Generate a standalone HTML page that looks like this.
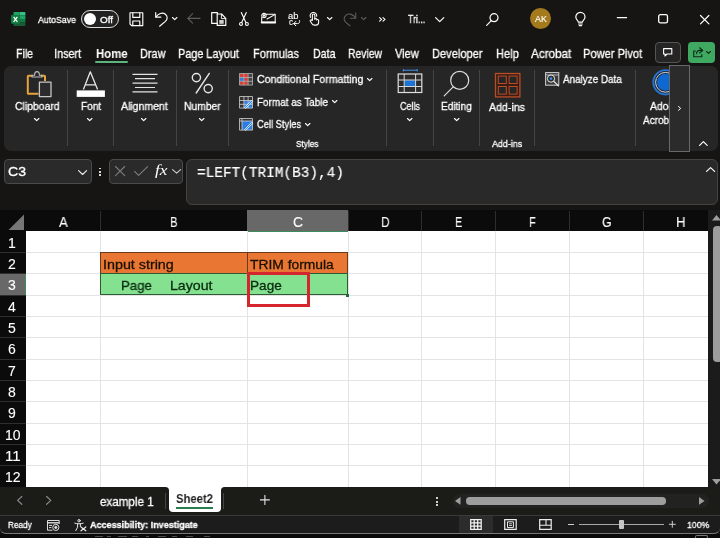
<!DOCTYPE html>
<html lang="en"><head><meta charset="utf-8"><title>Excel</title>
<style>
html,body{margin:0;padding:0;background:#161513;}
body{width:720px;height:538px;overflow:hidden;font-family:"Liberation Sans",sans-serif;}
#app{position:relative;width:720px;height:538px;overflow:hidden;background:#161513;}
.t{position:absolute;z-index:1;will-change:transform;-webkit-text-stroke:0.3px currentColor;white-space:pre;line-height:1;transform-origin:0 50%;}
.a{position:absolute;}
svg{position:absolute;overflow:visible;}
.sep{position:absolute;width:1px;background:#444;top:70px;height:76px;}
.gl{position:absolute;background:#e4e4e4;}

</style></head><body>
<div id="app">
<div class="a" style="left:3.7px;top:65.6px;width:714.3px;height:85.8px;background:#262626;border-radius:7px;"></div>
<div class="sep" style="left:67.1px;"></div>
<div class="sep" style="left:113.3px;"></div>
<div class="sep" style="left:175.8px;"></div>
<div class="sep" style="left:228.3px;"></div>
<div class="sep" style="left:385.9px;"></div>
<div class="sep" style="left:433.1px;"></div>
<div class="sep" style="left:478.9px;"></div>
<div class="sep" style="left:534.3px;"></div>
<div class="sep" style="left:634.9px;"></div>
<div class="a" style="left:95px;top:60.6px;width:32.5px;height:2px;background:#5fb37f;border-radius:1px;"></div>
<div class="a" style="left:4px;top:159px;width:86.5px;height:24px;background:#2a2a2a;border:1px solid #4a4a4a;border-radius:4px;box-sizing:border-box;width:87.5px;height:25px;"></div>
<div class="a" style="left:109px;top:159px;width:74px;height:25px;background:#2a2a2a;border:1px solid #4a4a4a;border-radius:4px;box-sizing:border-box;"></div>
<div class="a" style="left:186.3px;top:159px;width:532px;height:45.5px;background:#292929;border:1px solid #444;border-radius:6px;box-sizing:border-box;"></div>
<div class="a" style="left:0;top:210.3px;width:707.6px;height:276.7px;background:#0b0b0b;"></div>
<div class="a" style="left:26.3px;top:231.3px;width:681.3000000000001px;height:255.7px;background:#fff;"></div>
<div class="a" style="left:99.5px;top:211px;width:1px;height:20px;background:#2e2e2e;"></div>
<div class="a" style="left:246.5px;top:211px;width:1px;height:20px;background:#2e2e2e;"></div>
<div class="a" style="left:347.5px;top:211px;width:1px;height:20px;background:#2e2e2e;"></div>
<div class="a" style="left:420.5px;top:211px;width:1px;height:20px;background:#2e2e2e;"></div>
<div class="a" style="left:494.5px;top:211px;width:1px;height:20px;background:#2e2e2e;"></div>
<div class="a" style="left:568.5px;top:211px;width:1px;height:20px;background:#2e2e2e;"></div>
<div class="a" style="left:642.8px;top:211px;width:1px;height:20px;background:#2e2e2e;"></div>
<div class="a" style="left:0;top:252.11px;width:26px;height:1px;background:#2e2e2e;"></div>
<div class="a" style="left:0;top:273.42px;width:26px;height:1px;background:#2e2e2e;"></div>
<div class="a" style="left:0;top:294.73px;width:26px;height:1px;background:#2e2e2e;"></div>
<div class="a" style="left:0;top:316.04px;width:26px;height:1px;background:#2e2e2e;"></div>
<div class="a" style="left:0;top:337.35px;width:26px;height:1px;background:#2e2e2e;"></div>
<div class="a" style="left:0;top:358.65999999999997px;width:26px;height:1px;background:#2e2e2e;"></div>
<div class="a" style="left:0;top:379.97px;width:26px;height:1px;background:#2e2e2e;"></div>
<div class="a" style="left:0;top:401.28px;width:26px;height:1px;background:#2e2e2e;"></div>
<div class="a" style="left:0;top:422.59000000000003px;width:26px;height:1px;background:#2e2e2e;"></div>
<div class="a" style="left:0;top:443.9px;width:26px;height:1px;background:#2e2e2e;"></div>
<div class="a" style="left:0;top:465.21000000000004px;width:26px;height:1px;background:#2e2e2e;"></div>
<div class="a" style="left:247px;top:210.3px;width:101px;height:20.3px;background:#686868;border-bottom:1.2px solid #3d8a5c;"></div>
<div class="a" style="left:0;top:273.92px;width:25.3px;height:21.31px;background:#686868;border-right:1.2px solid #3d8a5c;"></div>
<svg style="left:8px;top:214px" width="17" height="17" viewBox="0 0 17 17"><path d="M16 0.5V16H0.5Z" fill="#767676"/></svg>
<div class="gl" style="left:99.5px;top:231.3px;width:1px;height:255.7px;"></div>
<div class="gl" style="left:246.5px;top:231.3px;width:1px;height:255.7px;"></div>
<div class="gl" style="left:347.5px;top:231.3px;width:1px;height:255.7px;"></div>
<div class="gl" style="left:420.5px;top:231.3px;width:1px;height:255.7px;"></div>
<div class="gl" style="left:494.5px;top:231.3px;width:1px;height:255.7px;"></div>
<div class="gl" style="left:568.5px;top:231.3px;width:1px;height:255.7px;"></div>
<div class="gl" style="left:642.8px;top:231.3px;width:1px;height:255.7px;"></div>
<div class="gl" style="left:26.3px;top:252.11px;width:681.3000000000001px;height:1px;"></div>
<div class="gl" style="left:26.3px;top:273.42px;width:681.3000000000001px;height:1px;"></div>
<div class="gl" style="left:26.3px;top:294.73px;width:681.3000000000001px;height:1px;"></div>
<div class="gl" style="left:26.3px;top:316.04px;width:681.3000000000001px;height:1px;"></div>
<div class="gl" style="left:26.3px;top:337.35px;width:681.3000000000001px;height:1px;"></div>
<div class="gl" style="left:26.3px;top:358.65999999999997px;width:681.3000000000001px;height:1px;"></div>
<div class="gl" style="left:26.3px;top:379.97px;width:681.3000000000001px;height:1px;"></div>
<div class="gl" style="left:26.3px;top:401.28px;width:681.3000000000001px;height:1px;"></div>
<div class="gl" style="left:26.3px;top:422.59000000000003px;width:681.3000000000001px;height:1px;"></div>
<div class="gl" style="left:26.3px;top:443.9px;width:681.3000000000001px;height:1px;"></div>
<div class="gl" style="left:26.3px;top:465.21000000000004px;width:681.3000000000001px;height:1px;"></div>
<div class="a" style="left:100px;top:252px;width:248px;height:22px;background:#e97632;box-sizing:border-box;border:1px solid #6b3a18;"></div>
<div class="a" style="left:246.5px;top:252px;width:1px;height:22px;background:#6b3a18;"></div>
<div class="a" style="left:100px;top:273px;width:248px;height:22.4px;background:#84e18f;box-sizing:border-box;border:1px solid #2c5a34;"></div>
<div class="a" style="left:246.5px;top:274px;width:1px;height:21px;background:#2c5a34;"></div>
<div class="a" style="left:346px;top:293.6px;width:3px;height:3px;background:#1d6b3e;"></div>
<div class="a" style="left:246.8px;top:271.8px;width:63px;height:35.4px;box-sizing:border-box;border:3px solid #d6262d;"></div>
<div class="a" style="left:707.6px;top:210.3px;width:12.399999999999977px;height:276.7px;background:#1b1b1b;"></div>
<div class="a" style="left:712.8px;top:226px;width:9px;height:136px;background:#9c9c9c;border-radius:4px;"></div>
<svg style="left:712.4px;top:215px" width="8" height="6" viewBox="0 0 8 6"><path d="M0 5.5L4.5 0L9 5.5Z" fill="#9e9e9e"/></svg>
<svg style="left:712.4px;top:479.2px" width="8" height="6" viewBox="0 0 8 6"><path d="M0 0L4.5 5.5L9 0Z" fill="#9e9e9e"/></svg>
<div class="a" style="left:0;top:487px;width:720px;height:28px;background:#1b1b18;"></div>
<div class="a" style="left:165.3px;top:493px;width:1px;height:16px;background:#454545;"></div>
<div class="a" style="left:222.6px;top:493px;width:1px;height:16px;background:#454545;"></div>
<div class="a" style="left:165.4px;top:487px;width:59.4px;height:3.6px;background:#fff;"></div>
<div class="a" style="left:165.4px;top:487px;width:3.6px;height:3.6px;background:#1b1b18;border-top-right-radius:3.6px;"></div>
<div class="a" style="left:221.1px;top:487px;width:3.7px;height:3.6px;background:#1b1b18;border-top-left-radius:3.6px;"></div>
<div class="a" style="left:169px;top:487px;width:52.1px;height:24.6px;background:#fff;border-radius:0 0 4px 4px;"></div>
<div class="a" style="left:176px;top:507.2px;width:37px;height:1.9px;background:#2a7d4f;"></div>
<div class="a" style="left:452.5px;top:494px;width:256px;height:14px;background:#222221;border-radius:7px;"></div>
<div class="a" style="left:466.3px;top:497px;width:200px;height:7.5px;background:#9e9e9e;border-radius:3.75px;"></div>
<svg style="left:455px;top:497px" width="6" height="8" viewBox="0 0 6 8"><path d="M5.5 0L0 3.9L5.5 7.8Z" fill="#9e9e9e"/></svg>
<svg style="left:699px;top:497px" width="6" height="8" viewBox="0 0 6 8"><path d="M0 0L5.5 3.9L0 7.8Z" fill="#9e9e9e"/></svg>
<div class="a" style="left:436px;top:497.3px;width:2px;height:2px;background:#d0d0d0;"></div>
<div class="a" style="left:436px;top:500.6px;width:2px;height:2px;background:#d0d0d0;"></div>
<div class="a" style="left:436px;top:503.9px;width:2px;height:2px;background:#d0d0d0;"></div>
<div class="a" style="left:0;top:514.7px;width:720px;height:19.5px;background:#1c1c1c;border-top:1px solid #3a3a3a;border-bottom:1px solid #777;border-radius:0 0 6px 6px;box-sizing:border-box;"></div>
<div class="a" style="left:0;top:534.2px;width:720px;height:4px;background:#0a0a0a;z-index:-0;"></div>
<div class="a" style="left:459.2px;top:515.5px;width:34.2px;height:17.6px;background:#2c2c2c;"></div>
<svg style="left:10.8px;top:11.9px" width="14.4" height="14" viewBox="0 0 14.4 14" stroke="none">
<path d="M3.2 0H8.6V3.5H2.5V0.7A0.7 0.7 0 0 1 3.2 0Z" fill="#21a366"/>
<path d="M8.6 0H13.7A0.7 0.7 0 0 1 14.4 0.7V3.5H8.6Z" fill="#33c481"/>
<rect x="2.5" y="3.5" width="6.1" height="3.5" fill="#107c41"/>
<rect x="8.6" y="3.5" width="5.8" height="3.5" fill="#21a366"/>
<rect x="2.5" y="7" width="6.1" height="3.5" fill="#185c37"/>
<rect x="8.6" y="7" width="5.8" height="3.5" fill="#107c41"/>
<path d="M2.5 10.5H14.4V13.3A0.7 0.7 0 0 1 13.7 14H3.2A0.7 0.7 0 0 1 2.5 13.3Z" fill="#185c37"/>
<rect x="0" y="2.9" width="8.8" height="8.8" rx="0.9" fill="#107c41"/>
<path d="M2.6 4.9L6.4 9.9M6.4 4.9L2.6 9.9" stroke="#fff" stroke-width="1.25" fill="none"/>
</svg>
<div class="a" style="left:81.2px;top:10.4px;width:38.2px;height:17.2px;box-sizing:border-box;border:1.1px solid #dcdcdc;border-radius:9px;background:#222;"></div>
<div class="a" style="left:83.9px;top:12.9px;width:12.3px;height:12.3px;border-radius:50%;background:#fff;"></div>
<svg style="left:128.7px;top:11.7px" width="14.4" height="14.2" viewBox="0 0 14.4 14.2" fill="none" stroke="#fff" stroke-width="1.15" stroke-linecap="round" stroke-linejoin="round"><path d="M1 0.8H13.8V13.6H2.6L1 12Z"/><path d="M3.8 0.8V5.4H10.8V0.8"/><path d="M3.8 13.6V9H10.8V13.6"/></svg>
<svg style="left:154px;top:11.7px" width="13.5" height="14.4" viewBox="0 0 13.5 14.4" fill="none" stroke="#fff" stroke-width="1.15" stroke-linecap="round" stroke-linejoin="round"><path d="M1.7 0.7V5.2H6.8"/><path d="M1.9 5C4 1.6 8.4 -0.2 11.4 2.2C14 4.4 13.5 7.4 11.4 9.4L5.6 14.2"/></svg>
<svg style="left:172px;top:16.7px" width="5.4" height="3.2" viewBox="0 0 5.4 3.2" fill="none" stroke="#fff" stroke-width="1.1" stroke-linecap="round" stroke-linejoin="round"><path d="M0.5 0.5L2.7 2.6L4.9 0.5"/></svg>
<svg style="left:186.7px;top:13px" width="13.5" height="11" viewBox="0 0 13.5 11" fill="none" stroke="#5c5c5c" stroke-width="1.1" stroke-linecap="round" stroke-linejoin="round"><path d="M13 5.4H0.8M5.6 0.6L0.8 5.4L5.6 10.2"/></svg>
<svg style="left:210.8px;top:12px" width="15.4" height="14" viewBox="0 0 15.4 14" fill="none" stroke="#fff" stroke-width="1.15" stroke-linecap="round" stroke-linejoin="round"><path d="M6.2 11.4H0.7V0.6H6.4V2"/><path d="M6.2 2H10.6L14.8 6.4V13.4H6.2Z"/><path d="M10.4 2.2V6.6H14.6" stroke-width="0.9"/><rect x="8.3" y="8" width="4.4" height="3.8" fill="#cfcfcf" stroke="none"/></svg>
<svg style="left:238.5px;top:12px" width="10" height="14" viewBox="0 0 10 14" fill="none" stroke="#fff" stroke-width="1.1" stroke-linecap="round" stroke-linejoin="round"><path d="M2.3 0.6L6.9 10.4M7.3 0.6L2.7 10.4"/><circle cx="2" cy="11.9" r="1.45"/><circle cx="7.9" cy="11.9" r="1.45"/></svg>
<svg style="left:260.8px;top:12px" width="14.8" height="11.8" viewBox="0 0 14.8 11.8" fill="none" stroke="#fff" stroke-width="1.05" stroke-linecap="round" stroke-linejoin="round"><path d="M5 2.2H14.2V10.2H0.7V5.6"/><path d="M0.7 10.5H14.2" stroke-width="1.9"/><path d="M6 7L13.8 2.6"/><circle cx="2.9" cy="3.6" r="2.2"/><circle cx="2.9" cy="3.6" r="0.7"/></svg>
<svg style="left:308.2px;top:12.2px" width="11.4" height="13.7" viewBox="0 0 12 14.4" fill="none" stroke="#fff" stroke-width="1.15" stroke-linecap="round" stroke-linejoin="round"><path d="M4.6 8.6V3.4A1.3 1.3 0 0 1 7.2 3.4V7.6"/><path d="M7.2 7.4A1.1 1.1 0 0 1 9.2 7.6V8.4A1.1 1.1 0 0 1 11.2 8.8V10.8C11.2 12.6 10.2 13.8 8.4 13.8H7C5.6 13.8 4.6 13.2 3.8 11.8L2.4 9.4C2 8.4 3.4 7.8 4.2 8.8"/><path d="M2.6 5.6A3.5 3.5 0 1 1 9.2 4.4"/></svg>
<svg style="left:327px;top:16.7px" width="5.4" height="3.2" viewBox="0 0 5.4 3.2" fill="none" stroke="#fff" stroke-width="1.1" stroke-linecap="round" stroke-linejoin="round"><path d="M0.5 0.5L2.7 2.6L4.9 0.5"/></svg>
<svg style="left:342.6px;top:11.7px" width="13.5" height="14.2" viewBox="0 0 13.5 14.2" fill="none" stroke="#5c5c5c" stroke-width="1.1" stroke-linecap="round" stroke-linejoin="round"><path d="M12.7 1V6.3H7.4"/><path d="M12.6 6.2C10.5 2.6 6.2 0.6 3.1 3.1C0.1 5.6 0.9 8.6 2.9 10.4L6.9 13.8"/></svg>
<svg style="left:360.8px;top:16.9px" width="5.4" height="3.2" viewBox="0 0 5.4 3.2" fill="none" stroke="#5c5c5c" stroke-width="1.1" stroke-linecap="round" stroke-linejoin="round"><path d="M0.5 0.5L2.7 2.6L4.9 0.5"/></svg>
<svg style="left:378.7px;top:17.4px" width="7" height="4.8" viewBox="0 0 7 4.8" fill="none" stroke="#fff" stroke-width="1.1" stroke-linecap="round" stroke-linejoin="round"><path d="M0.6 0.6L2.6 2.4L0.6 4.2M4 0.6L6 2.4L4 4.2"/></svg>
<svg style="left:434.5px;top:16.6px" width="9.4" height="5.4" viewBox="0 0 9.4 5.4" fill="none" stroke="#fff" stroke-width="1.2" stroke-linecap="round" stroke-linejoin="round"><path d="M0.6 0.6L4.7 4.7L8.8 0.6"/></svg>
<svg style="left:485.6px;top:12.6px" width="12.8" height="13" viewBox="0 0 12.8 13" fill="none" stroke="#fff" stroke-width="1.2" stroke-linecap="round" stroke-linejoin="round"><path d="M0.7 12.3L5.2 7.6"/><circle cx="8" cy="4.7" r="4"/></svg>
<div class="a" style="left:530.4px;top:8.4px;width:20.8px;height:20.8px;border-radius:50%;background:#a47a1c;"></div>
<svg style="left:575.4px;top:11.8px" width="11" height="14.2" viewBox="0 0 11 14.2" fill="none" stroke="#fff" stroke-width="1.2" stroke-linecap="round" stroke-linejoin="round"><path d="M3.4 10.2C3.4 8.6 0.8 7.8 0.8 5A4.6 4.6 0 0 1 10 5C10 7.8 7.4 8.6 7.4 10.2Z"/><path d="M3.6 12H7.2M4.2 13.6H6.6"/></svg>
<svg style="left:616.5px;top:17.4px" width="10" height="1.4" viewBox="0 0 10 1.4" fill="none" stroke="#fff" stroke-width="1.2" stroke-linecap="round" stroke-linejoin="round"><path d="M0.3 0.7H9.6"/></svg>
<svg style="left:657.8px;top:14.3px" width="10.2" height="9.6" viewBox="0 0 10.2 9.6" fill="none" stroke="#fff" stroke-width="1.3" stroke-linecap="round" stroke-linejoin="round"><rect x="0.7" y="0.7" width="8.8" height="8.2" rx="1.7"/></svg>
<svg style="left:700px;top:14.6px" width="9.4" height="9.4" viewBox="0 0 9.4 9.4" fill="none" stroke="#fff" stroke-width="1.2" stroke-linecap="round" stroke-linejoin="round"><path d="M0.5 0.5L8.9 8.9M8.9 0.5L0.5 8.9"/></svg>
<div class="a" style="left:654.6px;top:42.2px;width:26.2px;height:20.4px;box-sizing:border-box;border:1px solid #555;border-radius:4px;background:#252525;"></div>
<svg style="left:663px;top:48.2px" width="9.6" height="8.8" viewBox="0 0 9.6 8.8" fill="none" stroke="#fff" stroke-width="1.1" stroke-linecap="round" stroke-linejoin="round"><path d="M0.6 0.6H8.8V6H4L2 8V6H0.6Z"/></svg>
<div class="a" style="left:688px;top:42.2px;width:27.2px;height:20.4px;border-radius:4px;background:#3fa861;"></div>
<svg style="left:693px;top:47px" width="11" height="10.6" viewBox="0 0 11 10.6" fill="none" stroke="#0d2a17" stroke-width="1.1" stroke-linecap="round" stroke-linejoin="round"><path d="M2.4 4H0.7V9.8H8.8V7.6"/><path d="M6.6 0.8L9.8 3.4L6.6 6M9.6 3.4H7C4.6 3.4 3.6 4.8 3.4 6.8"/></svg>
<svg style="left:706.2px;top:50.8px" width="5" height="3" viewBox="0 0 5 3" fill="none" stroke="#0d2a17" stroke-width="1.1" stroke-linecap="round" stroke-linejoin="round"><path d="M0.5 0.5L2.5 2.4L4.5 0.5"/></svg>
<svg style="left:26px;top:70px" width="27" height="28" viewBox="0 0 27 28" fill="none" stroke-linejoin="round">
<path d="M6.4 5.8H2.6A0.8 0.8 0 0 0 1.8 6.6V23A0.8 0.8 0 0 0 2.6 23.8H12.4M15 5.8H18.2A0.8 0.8 0 0 1 19 6.6V11" stroke="#e8a33c" stroke-width="2"/>
<path d="M6 7V5.2H8.6C8.6 3 9.6 1.6 11 1.6C12.4 1.6 13.4 3 13.4 5.2H16V7Z" stroke="#bdbdbd" stroke-width="1.1"/>
<rect x="13.4" y="12.2" width="11.6" height="14.4" fill="#2b2b2b" stroke="#c6c6c6" stroke-width="1.3"/>
</svg>
<svg style="left:33.8px;top:118px" width="5.4" height="3.2" viewBox="0 0 5.4 3.2" fill="none" stroke="#fff" stroke-width="1.15" stroke-linecap="round" stroke-linejoin="round"><path d="M0.5 0.5L2.7 2.6L4.9 0.5"/></svg>
<svg style="left:76px;top:70px" width="30" height="28" viewBox="0 0 30 28" fill="none">
<path d="M7.6 19L14.3 1.8L21.4 19M9.6 14.8H19.6" stroke="#e6e6e6" stroke-width="1.3" stroke-linejoin="round" stroke-linecap="round"/>
<rect x="0.7" y="20.4" width="28.2" height="6.5" fill="#fff"/>
</svg>
<svg style="left:87.4px;top:118px" width="5.4" height="3.2" viewBox="0 0 5.4 3.2" fill="none" stroke="#fff" stroke-width="1.15" stroke-linecap="round" stroke-linejoin="round"><path d="M0.5 0.5L2.7 2.6L4.9 0.5"/></svg>
<svg style="left:131px;top:72px" width="28" height="22" viewBox="0 0 28 22" fill="none" stroke="#e2e2e2" stroke-width="1.2">
<path d="M1.5 2.3H26.5M4 6.7H24M1.5 11.1H26.5M4 15.5H24M1.5 19.8H26.5"/>
</svg>
<svg style="left:141.3px;top:118px" width="5.4" height="3.2" viewBox="0 0 5.4 3.2" fill="none" stroke="#fff" stroke-width="1.15" stroke-linecap="round" stroke-linejoin="round"><path d="M0.5 0.5L2.7 2.6L4.9 0.5"/></svg>
<svg style="left:190px;top:72px" width="24" height="23" viewBox="0 0 24 23" fill="none" stroke="#e6e6e6" stroke-width="1.4" stroke-linecap="round">
<circle cx="6.4" cy="5.6" r="4.1"/><circle cx="18.2" cy="16.6" r="4.1"/><path d="M19.3 1.4L6.2 21"/>
</svg>
<svg style="left:199.4px;top:118px" width="5.4" height="3.2" viewBox="0 0 5.4 3.2" fill="none" stroke="#fff" stroke-width="1.15" stroke-linecap="round" stroke-linejoin="round"><path d="M0.5 0.5L2.7 2.6L4.9 0.5"/></svg>
<svg style="left:239px;top:73px" width="14" height="12.6" viewBox="0 0 14 12.6">
<rect x="0.5" y="0.5" width="13" height="11.6" fill="#3a3a3a"/>
<rect x="1" y="1" width="3.6" height="3.2" fill="#e03c32"/><rect x="5.2" y="1" width="3.6" height="3.2" fill="#e03c32"/><rect x="9.4" y="1" width="3.6" height="3.2" fill="#444"/>
<rect x="1" y="4.8" width="3.6" height="3.2" fill="#2f7de0"/><rect x="5.2" y="4.8" width="3.6" height="3.2" fill="#e03c32"/><rect x="9.4" y="4.8" width="3.6" height="3.2" fill="#444"/>
<rect x="1" y="8.6" width="3.6" height="3.2" fill="#e03c32"/><rect x="5.2" y="8.6" width="3.6" height="3.2" fill="#e03c32"/><rect x="9.4" y="8.6" width="3.6" height="3.2" fill="#444"/>
<path d="M0.5 0.5H13.5V12.1H0.5ZM4.9 0.5V12.1M9.1 0.5V12.1M0.5 4.5H13.5M0.5 8.3H13.5" fill="none" stroke="#c9c9c9" stroke-width="0.7"/>
</svg>
<svg style="left:239px;top:95.7px" width="14.4" height="12.8" viewBox="0 0 14.4 12.8">
<rect x="0.5" y="0.5" width="13" height="11.6" fill="#333"/>
<rect x="4.9" y="4.5" width="8.6" height="7.6" fill="#2a7de1"/>
<path d="M0.5 0.5H13.5V12.1H0.5ZM4.9 0.5V12.1M9.1 0.5V12.1M0.5 4.5H13.5M0.5 8.3H13.5" fill="none" stroke="#d0d0d0" stroke-width="0.8"/>
<path d="M5.6 11.6L12.6 4.2L13.8 5.4L6.6 12.4Z" fill="#2a7de1" stroke="#fff" stroke-width="0.8"/>
</svg>
<svg style="left:239px;top:118.2px" width="14.4" height="12.8" viewBox="0 0 14.4 12.8">
<rect x="0.5" y="0.5" width="13" height="11.6" fill="#333"/>
<rect x="3" y="3" width="10.5" height="9" fill="#2a7de1"/>
<path d="M0.5 0.5H13.5V12.1H0.5ZM0.5 3H13.5M3 0.5V12.1" fill="none" stroke="#d0d0d0" stroke-width="0.8"/>
<path d="M5.6 11.6L12.6 4.2L13.8 5.4L6.6 12.4Z" fill="#2a7de1" stroke="#fff" stroke-width="0.8"/>
</svg>
<svg style="left:366.6px;top:77.8px" width="5.4" height="3.2" viewBox="0 0 5.4 3.2" fill="none" stroke="#fff" stroke-width="1.15" stroke-linecap="round" stroke-linejoin="round"><path d="M0.5 0.5L2.7 2.6L4.9 0.5"/></svg>
<svg style="left:331.6px;top:100.4px" width="5.4" height="3.2" viewBox="0 0 5.4 3.2" fill="none" stroke="#fff" stroke-width="1.15" stroke-linecap="round" stroke-linejoin="round"><path d="M0.5 0.5L2.7 2.6L4.9 0.5"/></svg>
<svg style="left:304.8px;top:122.8px" width="5.4" height="3.2" viewBox="0 0 5.4 3.2" fill="none" stroke="#fff" stroke-width="1.15" stroke-linecap="round" stroke-linejoin="round"><path d="M0.5 0.5L2.7 2.6L4.9 0.5"/></svg>
<svg style="left:397px;top:68px" width="26" height="26" viewBox="0 0 26 26" fill="none">
<rect x="1.2" y="6" width="23.6" height="18.5" fill="#2b2b2b" stroke="#e0e0e0" stroke-width="1.2"/>
<rect x="7.4" y="12.2" width="11" height="6.2" fill="#1a73d6"/>
<path d="M7.2 6V24.5M18.6 6V24.5M1.2 12H24.8M1.2 18.5H24.8" stroke="#d8d8d8" stroke-width="1"/>
<path d="M6.4 2.3H20.2M6.4 1V3.6M20.2 1V3.6" stroke="#3a8ee6" stroke-width="1.1"/>
</svg>
<svg style="left:406.9px;top:118.2px" width="5.4" height="3.2" viewBox="0 0 5.4 3.2" fill="none" stroke="#fff" stroke-width="1.15" stroke-linecap="round" stroke-linejoin="round"><path d="M0.5 0.5L2.7 2.6L4.9 0.5"/></svg>
<svg style="left:442px;top:69px" width="30" height="30" viewBox="0 0 30 30" fill="none" stroke="#dcdcdc" stroke-width="1.2" stroke-linecap="round">
<circle cx="17.7" cy="11.4" r="9"/><path d="M11.2 17.8L2.2 26.8"/>
</svg>
<svg style="left:453.6px;top:118.2px" width="5.4" height="3.2" viewBox="0 0 5.4 3.2" fill="none" stroke="#fff" stroke-width="1.15" stroke-linecap="round" stroke-linejoin="round"><path d="M0.5 0.5L2.7 2.6L4.9 0.5"/></svg>
<svg style="left:494px;top:72px" width="27" height="26" viewBox="0 0 27 26" fill="none" stroke="#b84e28">
<rect x="1.5" y="1.5" width="24.4" height="23.4" fill="#3a1d12" stroke-width="1.3"/>
<rect x="4.3" y="4.1" width="8" height="7.4" fill="#262626" stroke-width="1"/>
<rect x="15.1" y="4.1" width="8" height="7.4" fill="#262626" stroke-width="1"/>
<rect x="4.3" y="14.5" width="8" height="7.6" fill="#262626" stroke-width="1"/>
<rect x="15.1" y="14.5" width="8" height="7.6" fill="#262626" stroke-width="1"/>
</svg>
<svg style="left:544.8px;top:72px" width="14.6" height="14.4" viewBox="0 0 14.6 14.4" fill="none">
<rect x="0.6" y="0.6" width="13.2" height="12.6" fill="#3c3c3c" stroke="#d2d2d2" stroke-width="1"/>
<path d="M0.6 3H13.8" stroke="#d2d2d2" stroke-width="0.8"/>
<circle cx="6" cy="6.6" r="3.6" fill="#2b2b2b" stroke="#e8e8e8" stroke-width="1"/>
<circle cx="6" cy="6.6" r="1.4" fill="#3a8ee6"/>
<path d="M8.8 9.4L13.4 13.8" stroke="#e8e8e8" stroke-width="1.3" stroke-linecap="round"/>
</svg>
<svg style="left:651px;top:68px" width="29" height="29" viewBox="0 0 29 29" fill="none">
<circle cx="14.5" cy="14.3" r="12.2" stroke="#2376d8" stroke-width="1.9"/>
<circle cx="14.5" cy="14.3" r="9.9" stroke="#c9dcf5" stroke-width="1"/>
<circle cx="14.5" cy="14.3" r="8.5" fill="#0f67d2"/>
</svg>
<div class="a" style="left:669.3px;top:65.2px;width:20.8px;height:86.4px;box-sizing:border-box;border:1px solid #686868;background:#2b2b2b;z-index:2;"></div>
<svg style="left:678px;top:106.3px;z-index:3" width="3.6" height="4.8" viewBox="0 0 3.6 4.8" fill="none" stroke="#fff" stroke-width="1" stroke-linecap="round" stroke-linejoin="round"><path d="M0.5 0.5L2.7 2.4L0.5 4.3"/></svg>
<svg style="left:699.4px;top:140.6px" width="8.8" height="5" viewBox="0 0 8.8 5" fill="none" stroke="#fff" stroke-width="1.2" stroke-linecap="round" stroke-linejoin="round"><path d="M0.6 4.4L4.4 0.6L8.2 4.4"/></svg>
<svg style="left:293.2px;top:19.6px" width="7.4" height="6.6" viewBox="0 0 7.4 6.6" fill="none" stroke="#fff" stroke-width="1.0" stroke-linecap="round" stroke-linejoin="round"><path d="M6.6 0.6V1.6C6.6 3 5.6 3.6 4.4 3.6H0.8M2.8 1.4L0.7 3.6L2.8 5.8"/></svg>
<svg style="left:77.6px;top:169.8px" width="9.2" height="5.2" viewBox="0 0 9.2 5.2" fill="none" stroke="#e8e8e8" stroke-width="1.2" stroke-linecap="round" stroke-linejoin="round"><path d="M0.6 0.6L4.6 4.5L8.6 0.6"/></svg>
<div class="a" style="left:99.2px;top:167.6px;width:1.8px;height:1.8px;background:#d8d8d8;"></div>
<div class="a" style="left:99.2px;top:170.9px;width:1.8px;height:1.8px;background:#d8d8d8;"></div>
<div class="a" style="left:99.2px;top:174.2px;width:1.8px;height:1.8px;background:#d8d8d8;"></div>
<svg style="left:115px;top:166.2px" width="10.2" height="10.2" viewBox="0 0 10.2 10.2" fill="none" stroke="#7d7d7d" stroke-width="1.1" stroke-linecap="round" stroke-linejoin="round"><path d="M0.5 0.5L9.7 9.7M9.7 0.5L0.5 9.7"/></svg>
<svg style="left:133.6px;top:166.2px" width="14.2" height="10" viewBox="0 0 14.2 10" fill="none" stroke="#7d7d7d" stroke-width="1.1" stroke-linecap="round" stroke-linejoin="round"><path d="M0.6 5.4L4.6 9.4L13.6 0.6"/></svg>
<svg style="left:172px;top:169.4px" width="9.2" height="4.8" viewBox="0 0 9.2 4.8" fill="none" stroke="#cfcfcf" stroke-width="1.1" stroke-linecap="round" stroke-linejoin="round"><path d="M0.6 0.6L4.6 4.2L8.6 0.6"/></svg>
<svg style="left:705.6px;top:167.2px" width="9.2" height="5" viewBox="0 0 9.2 5" fill="none" stroke="#fff" stroke-width="1.2" stroke-linecap="round" stroke-linejoin="round"><path d="M0.6 4.4L4.6 0.6L8.6 4.4"/></svg>
<svg style="left:17.2px;top:496.2px" width="5.4" height="8.8" viewBox="0 0 5.4 8.8" fill="none" stroke="#8a8a8a" stroke-width="1.2" stroke-linecap="round" stroke-linejoin="round"><path d="M4.8 0.5L0.6 4.4L4.8 8.3"/></svg>
<svg style="left:45.6px;top:496.2px" width="5.4" height="8.8" viewBox="0 0 5.4 8.8" fill="none" stroke="#8a8a8a" stroke-width="1.2" stroke-linecap="round" stroke-linejoin="round"><path d="M0.6 0.5L4.8 4.4L0.6 8.3"/></svg>
<svg style="left:260.3px;top:495.3px" width="9.8" height="9.8" viewBox="0 0 9.8 9.8" fill="none" stroke="#e6e6e6" stroke-width="1.1" stroke-linecap="round" stroke-linejoin="round"><path d="M4.9 0.4V9.4M0.4 4.9H9.4"/></svg>
<svg style="left:47.2px;top:519.6px" width="13" height="11.2" viewBox="0 0 13 11.2" fill="none" stroke="#e0e0e0" stroke-width="1">
<path d="M0.5 0.5H12.2V4M0.5 0.5V10.2H5.4"/><path d="M0.5 2.8H12.2" stroke-width="1.4"/><path d="M2 5.4H5M2 7.6H4.4"/>
<circle cx="8.8" cy="7.4" r="3.1"/><circle cx="8.8" cy="7.4" r="1.1" fill="#e0e0e0"/>
</svg>
<svg style="left:74.2px;top:518.6px" width="12.8" height="12.4" viewBox="0 0 12.8 12.4" fill="none" stroke="#e8e8e8" stroke-width="1" stroke-linecap="round" stroke-linejoin="round">
<circle cx="5" cy="1.7" r="1.2"/><path d="M0.8 4.2C3.4 5 6.6 5 9.2 4.2M3.6 5V8.2L1.8 11.6M6.4 5V7.4"/><path d="M7 8L11.8 11.8M11.8 8L7 11.8" stroke-width="1.2"/>
</svg>
<svg style="left:470px;top:518.6px" width="12" height="11.2" viewBox="0 0 12 11.2" fill="none" stroke="#f4f4f4" stroke-width="1.25">
<path d="M0.7 0.7H11.2V10.4H0.7ZM4.2 0.7V10.4M7.7 0.7V10.4M0.7 3.9H11.2M0.7 7.2H11.2"/></svg>
<svg style="left:504.2px;top:518.6px" width="13" height="11.2" viewBox="0 0 13 11.2" fill="none" stroke="#ececec" stroke-width="1.2">
<path d="M0.7 0.7H12.2V10.4H0.7Z"/><path d="M3.5 2.8H9.4V8.6H3.5Z" stroke-width="1"/><path d="M5 4.8H8M5 6.5H8" stroke-width="0.8"/></svg>
<svg style="left:538.8px;top:518.6px" width="13" height="11.2" viewBox="0 0 13 11.2" fill="none" stroke="#ececec" stroke-width="1.2">
<path d="M0.7 0.7H12.2V10.4H0.7Z"/><path d="M7 0.7V6.2M0.7 6.2H12.2" stroke-width="1.1"/></svg>
<div class="a" style="left:567.5px;top:524px;width:6.4px;height:1px;background:#d0d0d0;"></div>
<div class="a" style="left:578.8px;top:524px;width:85px;height:1px;background:#a8a8a8;"></div>
<div class="a" style="left:619px;top:519.6px;width:4.6px;height:9.8px;background:#c4c4c4;border-radius:1px;"></div>
<svg style="left:668.8px;top:521.2px" width="6.6" height="6.6" viewBox="0 0 6.6 6.6" fill="none" stroke="#d0d0d0" stroke-width="1" stroke-linecap="round" stroke-linejoin="round"><path d="M3.3 0.3V6.3M0.3 3.3H6.3"/></svg>
<div class="a" style="left:95px;top:535.6px;width:8px;height:1.4px;background:#4c4c4c;"></div>
<div class="a" style="left:107px;top:535.6px;width:4px;height:1.4px;background:#4c4c4c;"></div>
<div class="a" style="left:118px;top:535.6px;width:9px;height:1.4px;background:#4c4c4c;"></div>
<div class="a" style="left:132px;top:535.6px;width:6px;height:1.4px;background:#4c4c4c;"></div>
<div class="a" style="left:146px;top:535.6px;width:3px;height:1.4px;background:#4c4c4c;"></div>
<div class="a" style="left:158px;top:535.6px;width:8px;height:1.4px;background:#4c4c4c;"></div>
<div class="a" style="left:172px;top:535.6px;width:5px;height:1.4px;background:#4c4c4c;"></div>
<div class="a" style="left:186px;top:535.6px;width:7px;height:1.4px;background:#4c4c4c;"></div>
<div class="a" style="left:204px;top:535.6px;width:6px;height:1.4px;background:#4c4c4c;"></div>
<div class="a" style="left:695px;top:535.4px;width:13px;height:3px;box-sizing:border-box;border:1px solid #777;border-bottom:none;border-radius:2px 2px 0 0;"></div>
<span class="t" id="t0" style="left:38.30px;top:15.00px;font-size:9.4px;color:#ffffff;transform:scaleX(0.9322);">AutoSave</span>
<span class="t" id="t1" style="left:100.30px;top:15.00px;font-size:9.4px;color:#ffffff;transform:scaleX(1.0532);">Off</span>
<span class="t" id="t2" style="left:407.80px;top:14.00px;font-size:10.8px;color:#ffffff;transform:scaleX(0.8112);">Tri...</span>
<span class="t" id="t3" style="left:535.10px;top:15.00px;font-size:8.6px;color:#ffffff;transform:scaleX(1.0289);-webkit-text-stroke-width:0.1px;">AK</span>
<span class="t" id="t4" style="left:15.90px;top:48.00px;font-size:12.2px;color:#ffffff;transform:scaleX(0.8706);">File</span>
<span class="t" id="t5" style="left:54.40px;top:48.00px;font-size:12.2px;color:#ffffff;transform:scaleX(0.8890);">Insert</span>
<span class="t" id="t6" style="left:95.50px;top:48.00px;font-size:12.2px;color:#ffffff;font-weight:700;transform:scaleX(0.9358);-webkit-text-stroke-width:0;">Home</span>
<span class="t" id="t7" style="left:139.50px;top:48.00px;font-size:12.2px;color:#ffffff;transform:scaleX(0.8962);">Draw</span>
<span class="t" id="t8" style="left:178.30px;top:48.00px;font-size:12.2px;color:#ffffff;transform:scaleX(0.8897);">Page Layout</span>
<span class="t" id="t9" style="left:253.30px;top:48.00px;font-size:12.2px;color:#ffffff;transform:scaleX(0.9036);">Formulas</span>
<span class="t" id="t10" style="left:312.50px;top:48.00px;font-size:12.2px;color:#ffffff;transform:scaleX(0.8738);">Data</span>
<span class="t" id="t11" style="left:348.00px;top:48.00px;font-size:12.2px;color:#ffffff;transform:scaleX(0.8507);">Review</span>
<span class="t" id="t12" style="left:395.00px;top:48.00px;font-size:12.2px;color:#ffffff;transform:scaleX(0.9045);">View</span>
<span class="t" id="t13" style="left:431.70px;top:48.00px;font-size:12.2px;color:#ffffff;transform:scaleX(0.9089);">Developer</span>
<span class="t" id="t14" style="left:496.30px;top:48.00px;font-size:12.2px;color:#ffffff;transform:scaleX(0.9131);">Help</span>
<span class="t" id="t15" style="left:530.80px;top:48.00px;font-size:12.2px;color:#ffffff;transform:scaleX(0.9615);">Acrobat</span>
<span class="t" id="t16" style="left:583.30px;top:48.00px;font-size:12.2px;color:#ffffff;transform:scaleX(0.9103);">Power Pivot</span>
<span class="t" id="t17" style="left:14.50px;top:101.00px;font-size:11.1px;color:#ffffff;transform:scaleX(0.9414);">Clipboard</span>
<span class="t" id="t18" style="left:80.50px;top:101.00px;font-size:11.1px;color:#ffffff;transform:scaleX(0.9143);">Font</span>
<span class="t" id="t19" style="left:121.30px;top:101.00px;font-size:11.1px;color:#ffffff;transform:scaleX(0.9464);">Alignment</span>
<span class="t" id="t20" style="left:183.80px;top:101.00px;font-size:11.1px;color:#ffffff;transform:scaleX(0.9298);">Number</span>
<span class="t" id="t21" style="left:257.00px;top:74.00px;font-size:10.8px;color:#ffffff;transform:scaleX(0.9804);">Conditional Formatting</span>
<span class="t" id="t22" style="left:257.00px;top:97.00px;font-size:10.8px;color:#ffffff;transform:scaleX(0.9195);">Format as Table</span>
<span class="t" id="t23" style="left:257.00px;top:119.00px;font-size:10.8px;color:#ffffff;transform:scaleX(0.8664);">Cell Styles</span>
<span class="t" id="t24" style="left:295.80px;top:139.00px;font-size:9.5px;color:#ffffff;transform:scaleX(0.8696);">Styles</span>
<span class="t" id="t25" style="left:400.00px;top:101.00px;font-size:11.1px;color:#ffffff;transform:scaleX(0.8106);">Cells</span>
<span class="t" id="t26" style="left:440.50px;top:101.00px;font-size:11.1px;color:#ffffff;transform:scaleX(0.9080);">Editing</span>
<span class="t" id="t27" style="left:489.10px;top:102.00px;font-size:11.1px;color:#ffffff;transform:scaleX(0.9568);">Add-ins</span>
<span class="t" id="t28" style="left:491.80px;top:139.00px;font-size:9.5px;color:#ffffff;transform:scaleX(0.9373);">Add-ins</span>
<span class="t" id="t29" style="left:562.60px;top:74.00px;font-size:10.8px;color:#ffffff;transform:scaleX(0.9141);">Analyze Data</span>
<span class="t" id="t30" style="left:650.10px;top:101.00px;font-size:11.1px;color:#ffffff;transform:scaleX(0.9379);">Adobe</span>
<span class="t" id="t31" style="left:642.70px;top:115.00px;font-size:11.1px;color:#ffffff;transform:scaleX(0.8997);">Acrobat</span>
<span class="t" id="t32" style="left:8.40px;top:165.00px;font-size:13.4px;color:#ffffff;transform:scaleX(1.0511);">C3</span>
<span class="t" id="t33" style="left:196.80px;top:166.00px;font-size:15px;color:#ffffff;font-family:'Liberation Mono', monospace;transform:scaleX(0.9606);-webkit-text-stroke-width:0.15px;">=LEFT(TRIM(B3),4)</span>
<span class="t" id="t34" style="left:155.30px;top:163.00px;font-size:15px;color:#ffffff;font-family:'Liberation Serif', serif;transform:scaleX(1.1544);font-style:italic;-webkit-text-stroke-width:0;">fx</span>
<span class="t" id="t35" style="left:58.60px;top:215.00px;font-size:14px;color:#ffffff;transform:scaleX(0.9418);-webkit-text-stroke-width:0.1px;">A</span>
<span class="t" id="t36" style="left:169.95px;top:215.00px;font-size:14px;color:#ffffff;transform:scaleX(0.8027);-webkit-text-stroke-width:0.1px;">B</span>
<span class="t" id="t37" style="left:292.50px;top:215.00px;font-size:14px;color:#ffffff;transform:scaleX(0.9877);-webkit-text-stroke-width:0.1px;">C</span>
<span class="t" id="t38" style="left:380.75px;top:215.00px;font-size:14px;color:#ffffff;transform:scaleX(0.8395);-webkit-text-stroke-width:0.1px;">D</span>
<span class="t" id="t39" style="left:454.90px;top:215.00px;font-size:14px;color:#ffffff;transform:scaleX(0.7706);-webkit-text-stroke-width:0.1px;">E</span>
<span class="t" id="t40" style="left:529.10px;top:215.00px;font-size:14px;color:#ffffff;transform:scaleX(0.7942);-webkit-text-stroke-width:0.1px;">F</span>
<span class="t" id="t41" style="left:601.50px;top:215.00px;font-size:14px;color:#ffffff;transform:scaleX(0.8815);-webkit-text-stroke-width:0.1px;">G</span>
<span class="t" id="t42" style="left:675.50px;top:215.00px;font-size:14px;color:#ffffff;transform:scaleX(0.9481);-webkit-text-stroke-width:0.1px;">H</span>
<span class="t" id="t43" style="left:7.70px;top:236.00px;font-size:14px;color:#ffffff;-webkit-text-stroke-width:0.1px;">1</span>
<span class="t" id="t44" style="left:7.70px;top:257.00px;font-size:14px;color:#ffffff;-webkit-text-stroke-width:0.1px;">2</span>
<span class="t" id="t45" style="left:7.70px;top:278.00px;font-size:14px;color:#ffffff;-webkit-text-stroke-width:0.1px;">3</span>
<span class="t" id="t46" style="left:7.70px;top:300.00px;font-size:14px;color:#ffffff;-webkit-text-stroke-width:0.1px;">4</span>
<span class="t" id="t47" style="left:7.70px;top:321.00px;font-size:14px;color:#ffffff;-webkit-text-stroke-width:0.1px;">5</span>
<span class="t" id="t48" style="left:7.70px;top:342.00px;font-size:14px;color:#ffffff;-webkit-text-stroke-width:0.1px;">6</span>
<span class="t" id="t49" style="left:7.70px;top:364.00px;font-size:14px;color:#ffffff;-webkit-text-stroke-width:0.1px;">7</span>
<span class="t" id="t50" style="left:7.70px;top:385.00px;font-size:14px;color:#ffffff;-webkit-text-stroke-width:0.1px;">8</span>
<span class="t" id="t51" style="left:7.70px;top:406.00px;font-size:14px;color:#ffffff;-webkit-text-stroke-width:0.1px;">9</span>
<span class="t" id="t52" style="left:5.00px;top:428.00px;font-size:14px;color:#ffffff;-webkit-text-stroke-width:0.1px;">10</span>
<span class="t" id="t53" style="left:5.00px;top:449.00px;font-size:14px;color:#ffffff;transform:scaleX(1.0724);-webkit-text-stroke-width:0.1px;">11</span>
<span class="t" id="t54" style="left:5.00px;top:470.00px;font-size:14px;color:#ffffff;-webkit-text-stroke-width:0.1px;">12</span>
<span class="t" id="t55" style="left:103.00px;top:258.00px;font-size:13.6px;color:#1a1000;transform:scaleX(1.0525);">Input string</span>
<span class="t" id="t56" style="left:250.00px;top:258.00px;font-size:13.6px;color:#1a1000;transform:scaleX(1.0179);">TRIM formula</span>
<span class="t" id="t57" style="left:120.50px;top:279.00px;font-size:13.6px;color:#0a2a10;transform:scaleX(0.9701);">Page</span>
<span class="t" id="t58" style="left:170.00px;top:279.00px;font-size:13.6px;color:#0a2a10;transform:scaleX(1.0409);">Layout</span>
<span class="t" id="t59" style="left:250.00px;top:279.00px;font-size:13.6px;color:#0a2a10;transform:scaleX(0.9858);">Page</span>
<span class="t" id="t60" style="left:99.70px;top:496.00px;font-size:12.3px;color:#ffffff;transform:scaleX(0.9445);">example 1</span>
<span class="t" id="t61" style="left:176.10px;top:493.00px;font-size:12.3px;color:#222;font-weight:700;transform:scaleX(0.9150);-webkit-text-stroke-width:0;">Sheet2</span>
<span class="t" id="t62" style="left:7.50px;top:520.00px;font-size:9.6px;color:#ffffff;transform:scaleX(0.8581);">Ready</span>
<span class="t" id="t63" style="left:90.00px;top:520.00px;font-size:9.6px;color:#ffffff;font-weight:700;transform:scaleX(0.9403);">Accessibility: Investigate</span>
<span class="t" id="t64" style="left:687.00px;top:520.00px;font-size:9.6px;color:#ffffff;transform:scaleX(0.9085);">100%</span>
<span class="t" id="t65" style="left:288.00px;top:13.00px;font-size:8.2px;color:#ffffff;transform:scaleX(1.1417);-webkit-text-stroke-width:0.1px;">ab</span>
<span class="t" id="t66" style="left:288.60px;top:19.00px;font-size:8.2px;color:#ffffff;transform:scaleX(0.9771);-webkit-text-stroke-width:0.1px;">c</span>
</div>
</body></html>
